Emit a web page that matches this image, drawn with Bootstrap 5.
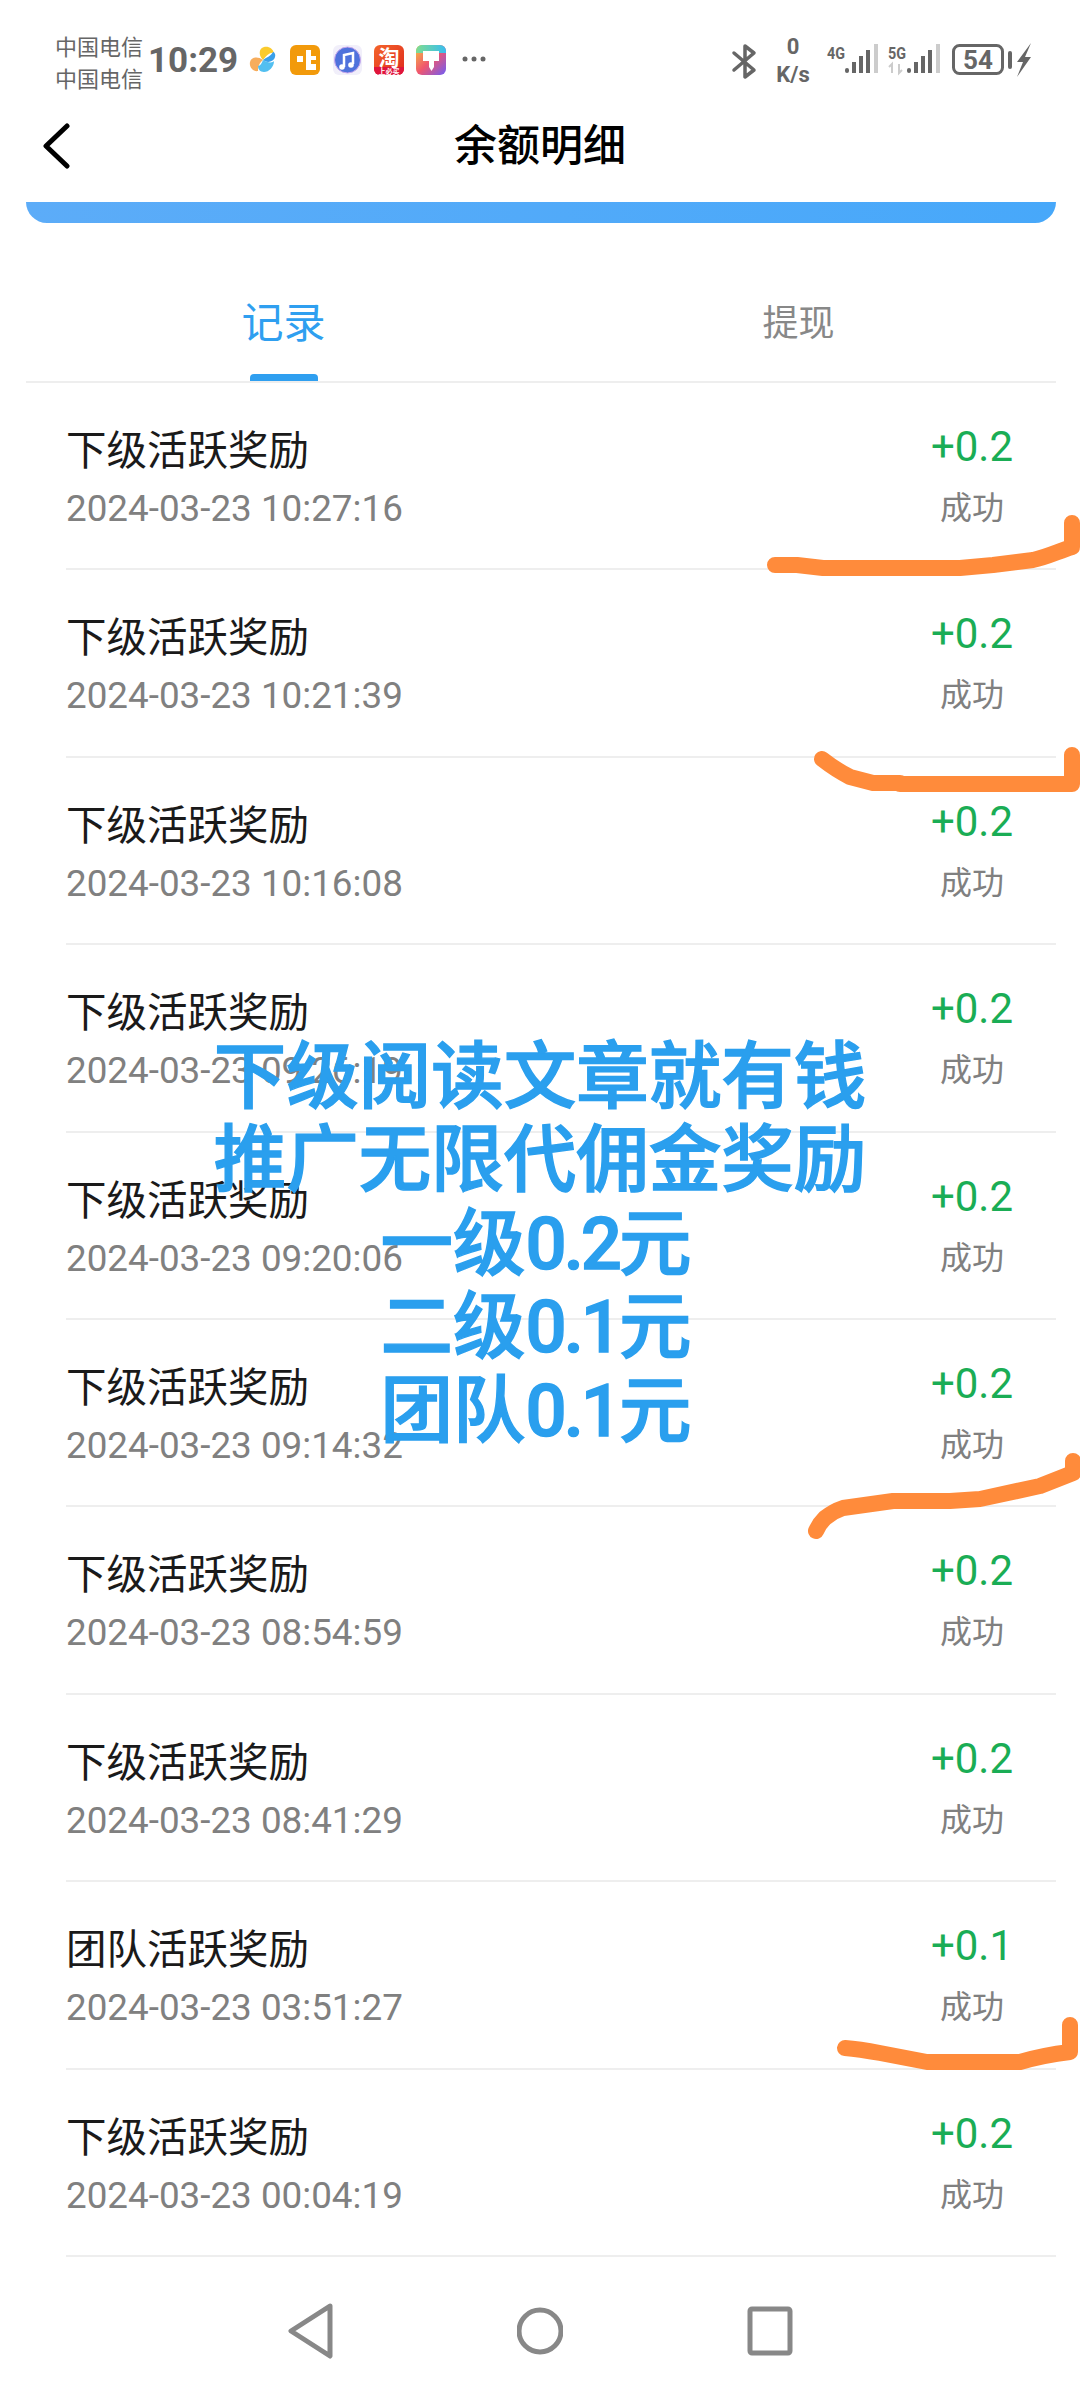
<!DOCTYPE html>
<html lang="zh-CN">
<head>
  <meta charset="UTF-8">
  <meta name="viewport" content="width=device-width, initial-scale=1.0">
  <title>余额明细</title>
  <link href="https://cdn.jsdelivr.net/npm/bootstrap@5.3.0/dist/css/bootstrap.min.css" rel="stylesheet">
  <style>
    body {
      width: 1080px;
      height: 2388px;
      overflow: hidden;
      position: relative;
      background: #fff;
      font-family: Roboto, "Noto Sans CJK SC", sans-serif;
    }
    .status-strip { height: 100px; padding: 29px 40px 0 55px; color: #666; }
    .carrier { font-size: 22px; line-height: 32px; width: 93px; font-family: "Noto Sans CJK SC", sans-serif; }
    .clock { font-size: 35px; font-weight: 700; line-height: 1; width: 97px; margin-top: 14px; }
    .app-icons { margin-top: 11px; }
    .sys-icons { margin-top: 1px; }
    .sys-label { font-family: Roboto, sans-serif; font-weight: 700; fill: #666; }
    .title-bar { height: 102px; padding: 0 0 10px 42px; }
    .title-text { font-size: 43px; font-weight: 500; color: #000; font-family: "Noto Sans CJK SC", sans-serif; line-height: 1; margin-top: -8px; }
    .blue-strip { height: 21px; margin: 0 24px 0 26px; background: linear-gradient(90deg, #5cacf8, #47a8fa); border-radius: 0 0 24px 24px; }
    .tab-row { height: 160px; margin: 0 24px 0 26px; border-bottom: 2px solid #eee; }
    .tab-item { width: 50%; padding-top: 69px; text-align: center; font-size: 36px; line-height: 56px; color: #888; font-family: "Noto Sans CJK SC", sans-serif; position: relative; }
    .tab-item.on { color: #2f9ff0; font-size: 42px; }
    .tab-item.on::after { content: ""; position: absolute; left: 224px; bottom: 0; width: 68px; height: 7px; background: #2f9ff0; border-radius: 4px 4px 0 0; }
    .rec-row { height: 187.4px; margin: 0 24px 0 66px; border-bottom: 2px solid #eee; padding-right: 43px; }
    .rec-name { font-size: 40.5px; line-height: 56px; margin-top: 37px; color: #1a1a1a; font-family: "Noto Sans CJK SC", sans-serif; }
    .rec-date { font-size: 36.8px; line-height: 40px; margin-top: 13px; color: #808080; }
    .rec-amt { font-size: 42px; line-height: 48px; margin-top: 40px; color: #1aad55; text-align: right; }
    .rec-state { font-size: 32px; line-height: 44px; margin-top: 12px; margin-right: 9px; color: #808080; text-align: right; font-family: "Noto Sans CJK SC", sans-serif; }
    .promo-text {
      position: absolute; left: 0; top: 1029px; width: 1080px;
      text-align: center; color: #2a9fee; font-size: 72.5px;
      font-weight: 500; -webkit-text-stroke: 1.4px #2a9fee; font-family: "Noto Sans CJK SC", sans-serif;
    }
    .promo-text > div { height: 83.4px; line-height: 83.4px; }
    .promo-short { margin-right: 8px; }
    .promo-num { letter-spacing: -3px; font-family: Roboto, sans-serif; font-weight: 500; line-height: 1; }
    .scribble { position: absolute; left: 0; top: 0; pointer-events: none; }
    .scribble path { fill: none; stroke: #ff8b3b; stroke-width: 16; stroke-linecap: round; stroke-linejoin: round; }
    .soft-nav { position: absolute; left: 0; top: 2302px; width: 1080px; gap: 184px; }
  </style>
</head>
<body>

  <div class="status-strip d-flex">
    <div class="carrier">中国电信<br>中国电信</div>
    <div class="clock">10:29</div>
    <svg class="app-icons" width="245" height="40" viewBox="245 40 245 40">
      <defs>
        <linearGradient id="tb" x1="0" y1="0" x2="1" y2="1"><stop offset="0" stop-color="#f4642a"/><stop offset="1" stop-color="#de2a1e"/></linearGradient>
        <linearGradient id="br1" x1="0" y1="0" x2="1" y2="1"><stop offset="0" stop-color="#f4c63e"/><stop offset=".5" stop-color="#f0566e"/><stop offset="1" stop-color="#6f5cf6"/></linearGradient>
        <linearGradient id="br2" x1="0" y1="0" x2="1" y2="0"><stop offset="0" stop-color="#7fdc90"/><stop offset="1" stop-color="#38bdf0"/></linearGradient>
      </defs>
      <!-- pinwheel -->
      <path d="M263 60c-5-5-4-12 1-13 5-1 9 2 10 6-4-1-7 2-11 7z" fill="#fbcb2d"/>
      <path d="M263 60c-5-4-12-3-13 2-1 5 3 10 8 9 0-4 1-8 5-11z" fill="#f7ad5c"/>
      <path d="M263 60c5 4 11 1 12-3 1-3-1-5-2-5-2 4-6 5-10 8z" fill="#3aa0ea"/>
      <path d="M263 60c4 3 10 3 11 1 0 6-5 11-10 11-4 0-6-3-6-6 2 0 4-3 5-6z" fill="#52bff0"/>
      <!-- orange app -->
      <rect x="290" y="45" width="30" height="30" rx="6" fill="#f29a0b"/>
      <path d="M297 56h6v6h-6zM306 50h5v6h5v4h-5v4h5v6h-10z" fill="#fff"/>
      <!-- music -->
      <rect x="333" y="45" width="29" height="30" rx="6" fill="#f1effa"/>
      <circle cx="347.500" cy="60" r="13" fill="#4f72dc" stroke="#c9a8ee" stroke-width="1"/>
      <path d="M344 67V55l9-2v11" fill="none" stroke="#fff" stroke-width="2.500"/>
      <circle cx="342" cy="67" r="2.800" fill="#fff"/><circle cx="351" cy="65" r="2.800" fill="#fff"/>
      <!-- taobao -->
      <rect x="374" y="45" width="30" height="30" rx="6" fill="url(#tb)"/>
      <path d="M374 67h30v2a6 6 0 0 1-6 6h-18a6 6 0 0 1-6-6z" fill="#e0143c"/>
      <text x="389" y="65" text-anchor="middle" font-size="21" font-weight="700" fill="#fff" font-family="Noto Sans CJK SC">淘</text>
      <text x="389" y="74" text-anchor="middle" font-size="7" font-weight="700" fill="#fff" font-family="Noto Sans CJK SC">上必买</text>
      <!-- brush -->
      <rect x="416" y="45" width="30" height="30" rx="6" fill="url(#br1)"/>
      <path d="M416 53v-2a6 6 0 0 1 6-6h18a6 6 0 0 1 6 6v2z" fill="url(#br2)"/>
      <path d="M423 51h16v10h-5v6l-2.500 4-2.500-4v-6h-6z" fill="#fff"/>
      <!-- more -->
      <circle cx="465" cy="59" r="2.500" fill="#666"/><circle cx="474" cy="59" r="2.500" fill="#666"/><circle cx="483" cy="59" r="2.500" fill="#666"/>
    </svg>
    <svg class="sys-icons ms-auto" width="315" height="60" viewBox="725 30 315 60">
      <!-- bluetooth -->
      <path d="M734 53l20 17-9 7V46l9 7-20 17" fill="none" stroke="#666" stroke-width="3.500" stroke-linejoin="round" stroke-linecap="round"/>
      <text class="sys-label" x="793" y="54" text-anchor="middle" font-size="22">0</text>
      <text class="sys-label" x="793" y="82" text-anchor="middle" font-size="22">K/s</text>
      <!-- 4G -->
      <text class="sys-label" x="827" y="59" font-size="17" textLength="18" lengthAdjust="spacingAndGlyphs">4G</text>
      <rect x="845" y="68" width="4" height="5" rx="2" fill="#666"/><rect x="852" y="62" width="4" height="11" fill="#666"/><rect x="859" y="56" width="4" height="17" fill="#666"/><rect x="866" y="50" width="4" height="23" fill="#666"/><rect x="874" y="44" width="4" height="29" fill="#ccc"/>
      <!-- 5G -->
      <text class="sys-label" x="888" y="59" font-size="17" textLength="18" lengthAdjust="spacingAndGlyphs">5G</text>
      <path d="M892 73v-9l-3 3M899 64v9l3-3" fill="none" stroke="#ccc" stroke-width="2"/>
      <rect x="907" y="68" width="4" height="5" rx="2" fill="#666"/><rect x="914" y="62" width="4" height="11" fill="#666"/><rect x="921" y="56" width="4" height="17" fill="#666"/><rect x="928" y="50" width="4" height="23" fill="#666"/><rect x="936" y="44" width="4" height="29" fill="#ccc"/>
      <!-- battery -->
      <rect x="953.500" y="45.500" width="49" height="28" rx="6" fill="none" stroke="#666" stroke-width="3"/>
      <text class="sys-label" x="978" y="69" text-anchor="middle" font-size="26">54</text>
      <rect x="1008" y="51" width="4" height="18" rx="2" fill="#666"/>
      <path d="M1031 43l-14 19h6l-6 15 14-20h-6z" fill="#666"/>
    </svg>
  </div>

  <div class="title-bar d-flex align-items-center position-relative">
    <svg width="28" height="46" viewBox="0 0 28 46"><path d="M25 3 4 23l21 20" fill="none" stroke="#000" stroke-width="5" stroke-linecap="round" stroke-linejoin="round"/></svg>
    <div class="title-text position-absolute start-50 translate-middle-x">余额明细</div>
  </div>

  <div class="blue-strip"></div>

  <div class="tab-row d-flex">
    <div class="tab-item on">记录</div>
    <div class="tab-item">提现</div>
  </div>

  <div id="records"></div>

  <!-- orange marker strokes -->
  <svg class="scribble" width="1080" height="2388" viewBox="0 0 1080 2388">
    <path d="M775 565h22l26 3h137l33-3 40-5c14-3 26-9 39-13v-24"/>
    <path d="M822 759c9 7 18 13 28 18l23 6h27v1h172v-29"/>
    <path d="M816 1531c3-7 6-10 9-13 6-5 12-8 18-10l50-7h57l30-2 60-13 33-13v-12"/>
    <path d="M845 2048c12 1 24 3 35 5l47 9h93c17-5 33-8 50-10v-27"/>
  </svg>

  <div class="promo-text">
    <div>下级阅读文章就有钱</div>
    <div>推广无限代佣金奖励</div>
    <div class="promo-short">一级<span class="promo-num">0.2</span>元</div>
    <div class="promo-short">二级<span class="promo-num">0.1</span>元</div>
    <div class="promo-short">团队<span class="promo-num">0.1</span>元</div>
  </div>

  <div class="soft-nav d-flex justify-content-center">
    <svg width="46" height="58" viewBox="0 0 46 58"><path d="M43 4 4 29l0 0 39 25z" fill="none" stroke="#888" stroke-width="5" stroke-linejoin="round"/></svg>
    <svg width="46" height="58" viewBox="0 0 46 58"><circle cx="23" cy="29" r="21" fill="none" stroke="#888" stroke-width="5"/></svg>
    <svg width="46" height="58" viewBox="0 0 46 58"><rect x="3" y="7" width="40" height="44" rx="2" fill="none" stroke="#888" stroke-width="5"/></svg>
  </div>

  <script>
    const rows = [
      ["下级活跃奖励", "10:27:16", "+0.2"], ["下级活跃奖励", "10:21:39", "+0.2"],
      ["下级活跃奖励", "10:16:08", "+0.2"], ["下级活跃奖励", "09:26:19", "+0.2"],
      ["下级活跃奖励", "09:20:06", "+0.2"], ["下级活跃奖励", "09:14:32", "+0.2"],
      ["下级活跃奖励", "08:54:59", "+0.2"], ["下级活跃奖励", "08:41:29", "+0.2"],
      ["团队活跃奖励", "03:51:27", "+0.1"], ["下级活跃奖励", "00:04:19", "+0.2"]
    ];
    document.getElementById("records").innerHTML = rows.map(r => `
      <div class="rec-row d-flex justify-content-between">
        <div><div class="rec-name">${r[0]}</div><div class="rec-date">2024-03-23 ${r[1]}</div></div>
        <div><div class="rec-amt">${r[2]}</div><div class="rec-state">成功</div></div>
      </div>`).join("");
  </script>
  <script src="https://cdn.jsdelivr.net/npm/bootstrap@5.3.0/dist/js/bootstrap.bundle.min.js"></script>
</body>
</html>
